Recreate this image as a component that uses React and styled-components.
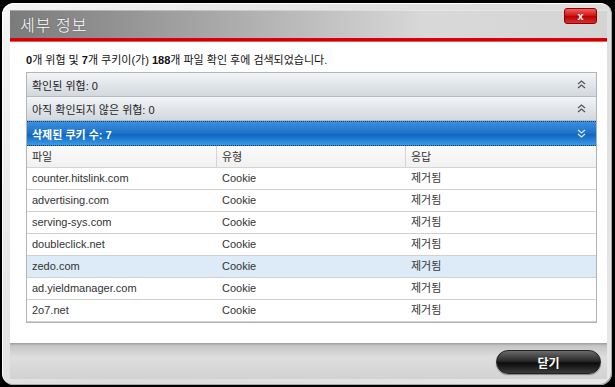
import styled, { createGlobalStyle } from "styled-components";

const GlobalStyle = createGlobalStyle`
  html, body {
    margin: 0;
    padding: 0;
    background: #000;
  }
  body {
    font-family: "Liberation Sans", "Noto Sans CJK KR", sans-serif;
    font-size: 11px;
    color: #222;
  }
`;

const Window = styled.div`
  box-sizing: border-box;
  width: 610px;
  height: 382px;
  margin: 3px 0 0 2px;
  padding: 7px 5px 6px 8px;
  border-radius: 12px;
  background: linear-gradient(135deg, #f4f4f4, #dcdcdc 50%, #e8e8e8);
  box-shadow: inset 1px 1px 0 #ffffff, inset -1px -1px 0 #a8a8a8;
  display: flex;
  flex-direction: column;
`;

const TitleBar = styled.div`
  height: 28px;
  display: flex;
  align-items: flex-start;
  justify-content: space-between;
  padding-left: 10px;
  background: linear-gradient(to right, #7b7b7b, #a9a9a9 35%, #d9d9d9 70%, #d4d4d4);
  box-shadow: inset 0 1px 0 rgba(255, 255, 255, 0.35);
`;

const Title = styled.div`
  font-family: "Noto Sans CJK KR", sans-serif;
  font-size: 16px;
  font-weight: 300;
  color: #fff;
  line-height: 28px;
  letter-spacing: 1px;
  text-shadow: 0 0 2px rgba(0, 0, 0, 0.25);
`;

const CloseButton = styled.button`
  width: 33px;
  height: 16px;
  margin: -2px 10px 0 0;
  padding: 0;
  border: 1px solid #8c0000;
  border-radius: 3px;
  background: linear-gradient(#f06060, #d01010 50%, #b80000 51%, #d83030);
  color: #fff;
  font-family: "Liberation Sans", sans-serif;
  font-size: 11px;
  font-weight: bold;
  line-height: 12px;
`;

const RedStripe = styled.div`
  height: 4px;
  background: linear-gradient(#e80000, #c80000 70%, #f4a0a0);
`;

const Content = styled.div`
  flex: 1;
  background: #fff;
  padding: 10px 10px 0 16px;
`;

const Summary = styled.div`
  font-family: "Liberation Sans", "Noto Sans CJK KR", sans-serif;
  font-size: 11px;
  line-height: 16px;
  color: #111;
  margin-bottom: 4px;
  b {
    font-weight: bold;
  }
`;

const Panel = styled.div`
  border: 1px solid #b4b4b4;
`;

const SectionRow = styled.div`
  box-sizing: border-box;
  height: ${(p) => (p.$active ? 25 : 24)}px;
  display: flex;
  align-items: center;
  justify-content: space-between;
  padding: 0 10px 0 5px;
  font-size: 11px;
  color: ${(p) => (p.$active ? "#fff" : "#222")};
  font-weight: ${(p) => (p.$active ? "bold" : "normal")};
  background: ${(p) =>
    p.$active
      ? "linear-gradient(#3d8fdc, #1b71c8 50%, #0f66c0 55%, #3a9ae6)"
      : "linear-gradient(#f3f5f7, #dfe3e7 60%, #d3d8dd)"};
  border-top: ${(p) => (p.$active ? "1px dotted #0a3f7a" : "none")};
  border-bottom: 1px ${(p) => (p.$active ? "dotted #0a3f7a" : "solid #b5bcc4")};
`;

const Grid = styled.div`
  display: grid;
  grid-template-columns: 189px 189px 1fr;
`;

const HeadCell = styled.div`
  height: 22px;
  line-height: 22px;
  padding-left: 5px;
  color: #333;
  background: linear-gradient(#fbfbfb, #f0f0f0);
  border-bottom: 1px solid #d4d4d4;
  border-left: ${(p) => (p.$first ? "none" : "1px solid #d4d4d4")};
  box-sizing: border-box;
`;

const Cell = styled.div`
  box-sizing: border-box;
  height: 22px;
  line-height: 21px;
  padding-left: ${(p) => (p.$first ? 5 : 6)}px;
  color: #333;
  background: ${(p) => (p.$hl ? "#dcebf7" : "#fff")};
  border-bottom: 1px solid #d0d0d0;
`;

const Footer = styled.div`
  height: 36px;
  display: flex;
  justify-content: flex-end;
  align-items: flex-start;
  padding: 7px 6px 0 0;
  box-sizing: border-box;
  background: linear-gradient(#9d9d9d, #c6c6c6 8%, #dedede 40%, #d2d2d2);
`;

const CloseAction = styled.button`
  width: 105px;
  height: 24px;
  border: 1px solid #222;
  border-radius: 12px;
  background: linear-gradient(#6a6a6a, #2a2a2a 45%, #0c0c0c 55%, #3a3a3a);
  color: #fff;
  font-family: "Noto Sans CJK KR", sans-serif;
  font-size: 12px;
  font-weight: bold;
  box-shadow: 0 1px 1px rgba(0, 0, 0, 0.4);
`;

function DoubleChevron({ down, color }) {
  const a = down ? "M1 1 L4.5 4 L8 1 M1 5 L4.5 8 L8 5" : "M1 4 L4.5 1 L8 4 M1 8 L4.5 5 L8 8";
  return (
    <svg width="9" height="9" viewBox="0 0 9 9">
      <path d={a} fill="none" stroke={color} strokeWidth="1.3" />
    </svg>
  );
}

const rows = [
  "counter.hitslink.com",
  "advertising.com",
  "serving-sys.com",
  "doubleclick.net",
  "zedo.com",
  "ad.yieldmanager.com",
  "2o7.net",
];

export default function App() {
  return (
    <>
      <GlobalStyle />
      <Window>
        <TitleBar>
          <Title>세부 정보</Title>
          <CloseButton>x</CloseButton>
        </TitleBar>
        <RedStripe />
        <Content>
          <Summary>
            <b>0</b>개 위협 및 <b>7</b>개 쿠키이(가) <b>188</b>개 파일 확인 후에 검색되었습니다.
          </Summary>
          <Panel>
            <SectionRow>
              확인된 위협: 0
              <DoubleChevron color="#555" />
            </SectionRow>
            <SectionRow>
              아직 확인되지 않은 위협: 0
              <DoubleChevron color="#555" />
            </SectionRow>
            <SectionRow $active>
              삭제된 쿠키 수: 7
              <DoubleChevron down color="#dbe9f8" />
            </SectionRow>
            <Grid>
              <HeadCell $first>파일</HeadCell>
              <HeadCell>유형</HeadCell>
              <HeadCell>응답</HeadCell>
              {rows.map((name, i) => {
                const hl = i === 4;
                return [
                  <Cell key={name + "a"} $first $hl={hl}>{name}</Cell>,
                  <Cell key={name + "b"} $hl={hl}>Cookie</Cell>,
                  <Cell key={name + "c"} $hl={hl}>제거됨</Cell>,
                ];
              })}
            </Grid>
          </Panel>
        </Content>
        <Footer>
          <CloseAction>닫기</CloseAction>
        </Footer>
      </Window>
    </>
  );
}
